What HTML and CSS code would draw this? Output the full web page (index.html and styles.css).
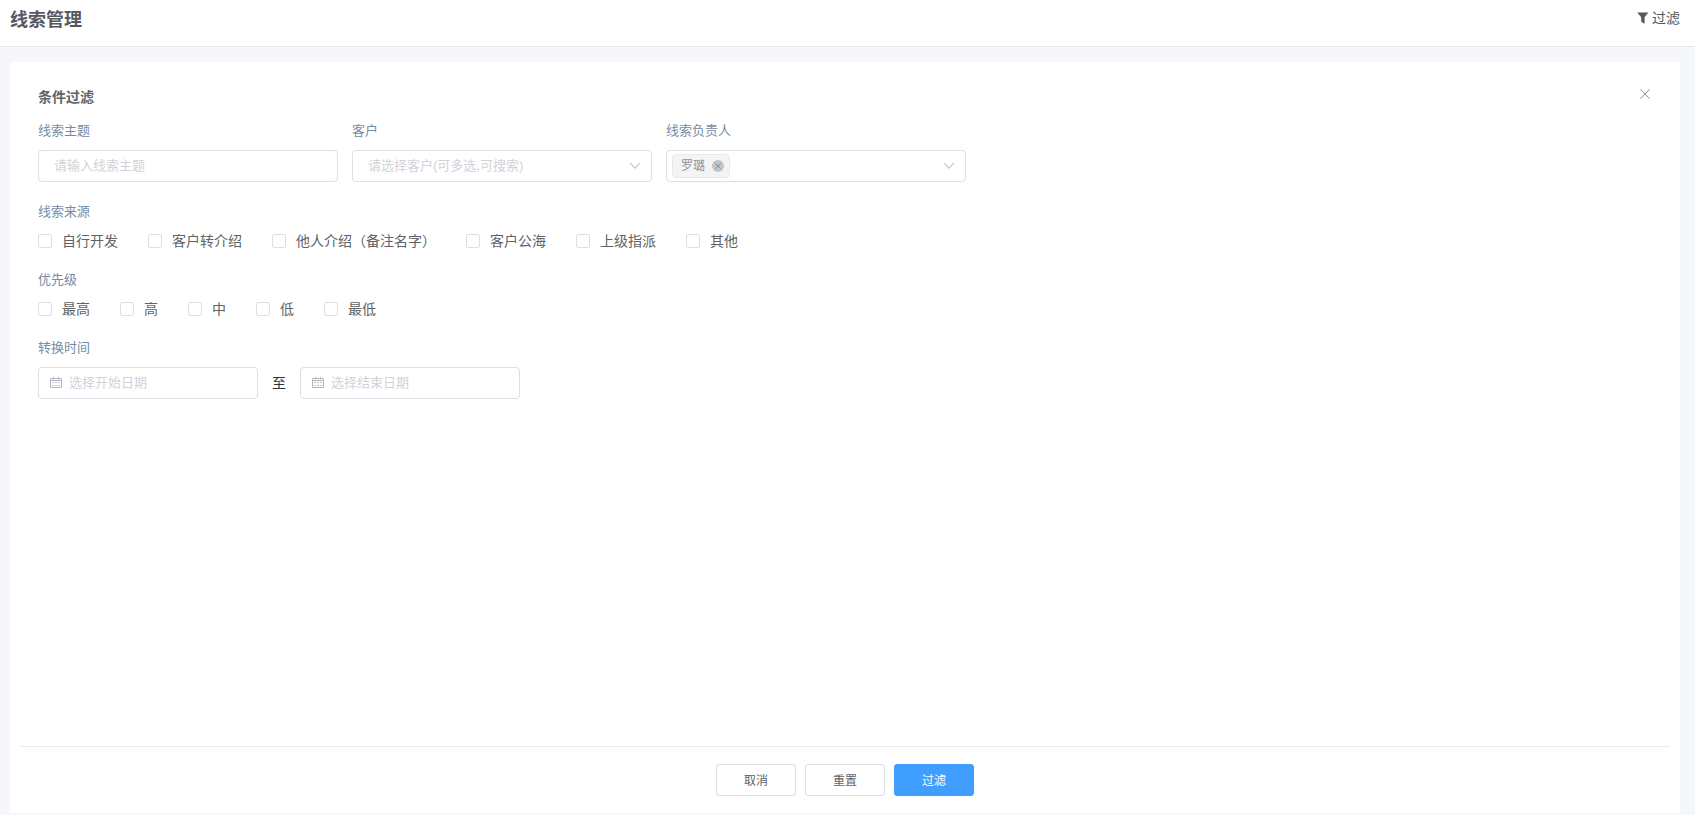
FILE: index.html
```
<!DOCTYPE html>
<html lang="zh-CN">
<head>
    <meta charset="UTF-8">
    <meta name="viewport" content="width=device-width, initial-scale=1.0">
    <title>线索管理</title>
    <link rel="stylesheet" href="styles.css">
</head>
<body>
    <header class="header">
        <h1>线索管理</h1>
        <a class="filter-link">
            <svg width="12" height="12" viewBox="0 0 12 12"><path d="M0.2 0.6h11.2L7.6 5.2v6.5L4.2 9.8V5.2z" fill="#55585e"/></svg>
            <span>过滤</span>
        </a>
    </header>

    <main class="panel">
        <div class="panel-body">
            <div class="panel-title">
                <h2>条件过滤</h2>
                <svg class="close" width="12" height="12" viewBox="0 0 12 12"><path d="M1.3 1.3l9.4 9.4M10.7 1.3l-9.4 9.4" fill="none" stroke="#909399"/></svg>
            </div>

            <div class="fields">
                <div class="field">
                    <div class="label">线索主题</div>
                    <div class="input"><span class="placeholder">请输入线索主题</span></div>
                </div>
                <div class="field">
                    <div class="label">客户</div>
                    <div class="input">
                        <span class="placeholder">请选择客户(可多选,可搜索)</span>
                        <svg class="arrow" width="12" height="8" viewBox="0 0 12 8"><path d="M1 1.2l5 5 5-5" fill="none" stroke="#c0c4cc" stroke-width="1.1"/></svg>
                    </div>
                </div>
                <div class="field">
                    <div class="label">线索负责人</div>
                    <div class="input input-tags">
                        <span class="tag">罗璐
                            <svg width="12" height="12" viewBox="0 0 12 12"><circle cx="6" cy="6" r="6" fill="#c0c4cc"/><path d="M3.4 3.4l5.2 5.2M8.6 3.4L3.4 8.6" stroke="#909399"/></svg>
                        </span>
                        <svg class="arrow" width="12" height="8" viewBox="0 0 12 8"><path d="M1 1.2l5 5 5-5" fill="none" stroke="#c0c4cc" stroke-width="1.1"/></svg>
                    </div>
                </div>
            </div>

            <div class="group">
                <div class="label">线索来源</div>
                <div class="checks">
                    <label class="check"><input type="checkbox">自行开发</label>
                    <label class="check"><input type="checkbox">客户转介绍</label>
                    <label class="check"><input type="checkbox">他人介绍（备注名字）</label>
                    <label class="check"><input type="checkbox">客户公海</label>
                    <label class="check"><input type="checkbox">上级指派</label>
                    <label class="check"><input type="checkbox">其他</label>
                </div>
            </div>

            <div class="group">
                <div class="label">优先级</div>
                <div class="checks">
                    <label class="check"><input type="checkbox">最高</label>
                    <label class="check"><input type="checkbox">高</label>
                    <label class="check"><input type="checkbox">中</label>
                    <label class="check"><input type="checkbox">低</label>
                    <label class="check"><input type="checkbox">最低</label>
                </div>
            </div>

            <div class="group">
                <div class="label">转换时间</div>
                <div class="dates">
                    <div class="input date">
                        <svg width="12" height="12" viewBox="0 0 12 12"><path d="M.5 1.5h11v9H.5zM.5 3.5h11M3.5 0v2.5M8.5 0v2.5" fill="none" stroke="#b4b8c0"/><path d="M2 5.5h8M2 8.5h8" fill="none" stroke="#c0c4cc" stroke-dasharray="2 1"/></svg>
                        <span class="placeholder">选择开始日期</span>
                    </div>
                    <span class="to">至</span>
                    <div class="input date">
                        <svg width="12" height="12" viewBox="0 0 12 12"><path d="M.5 1.5h11v9H.5zM.5 3.5h11M3.5 0v2.5M8.5 0v2.5" fill="none" stroke="#b4b8c0"/><path d="M2 5.5h8M2 8.5h8" fill="none" stroke="#c0c4cc" stroke-dasharray="2 1"/></svg>
                        <span class="placeholder">选择结束日期</span>
                    </div>
                </div>
            </div>
        </div>

        <footer class="footer">
            <button>取消</button>
            <button>重置</button>
            <button class="primary">过滤</button>
        </footer>
    </main>
</body>
</html>
```
FILE: styles.css
```
* {
    box-sizing: border-box;
}
body {
    display: flex;
    flex-direction: column;
    height: 100vh;
    margin: 0;
    overflow: hidden;
    background-color: #f5f7fb;
    color: #606266;
    font-family: "Liberation Sans", "Noto Sans CJK SC", sans-serif;
    font-size: 14px;
    line-height: 20px;
}
h1, h2 {
    margin: 0;
}
svg {
    display: block;
    flex: none;
}
.header {
    display: flex;
    justify-content: space-between;
    height: 47px;
    padding: 8px 15px 0 10px;
    background-color: #fff;
    border-bottom: 1px solid #e6e8eb;
}
.header h1 {
    font-size: 18px;
    line-height: 24px;
    color: #55585e;
}
.filter-link {
    display: flex;
    align-items: center;
    gap: 3px;
    height: 20px;
    color: #55585e;
}
.panel {
    display: flex;
    flex-direction: column;
    flex: 1;
    margin: 15px 15px 2px 10px;
    padding: 0 10px;
    background-color: #fff;
}
.panel-body {
    flex: 1;
    padding: 25px 18px 0;
}
.panel-title {
    display: flex;
    justify-content: space-between;
}
.panel-title h2 {
    font-size: 14px;
}
.close {
    margin: 1px 1px 0 0;
}
.fields {
    display: flex;
    gap: 14px;
    margin-top: 13px;
}
.field {
    width: 300px;
}
.label {
    font-size: 13px;
    line-height: 22px;
    color: #778ca2;
}
.input {
    display: flex;
    align-items: center;
    justify-content: space-between;
    height: 32px;
    margin-top: 8px;
    padding: 0 10px 0 15px;
    border: 1px solid #dcdfe6;
    border-radius: 4px;
    font-size: 13px;
}
.input-tags {
    padding-left: 5px;
}
.placeholder {
    color: #d0d3da;
}
.tag {
    display: flex;
    align-items: center;
    gap: 7px;
    height: 24px;
    padding: 0 5px 0 8px;
    background-color: #f4f4f5;
    border: 1px solid #e9e9eb;
    border-radius: 4px;
    font-size: 12px;
    color: #909399;
}
.group {
    margin-top: 18px;
}
.fields + .group {
    margin-top: 19px;
}
.checks {
    display: flex;
    gap: 30px;
    margin-top: 8px;
}
.check {
    display: flex;
    align-items: center;
    gap: 10px;
}
.check input {
    appearance: none;
    width: 14px;
    height: 14px;
    margin: 0;
    background-color: #fff;
    border: 1px solid #dcdfe6;
    border-radius: 2px;
}
.dates {
    display: flex;
    align-items: center;
    margin-top: 8px;
}
.date {
    justify-content: flex-start;
    gap: 7px;
    width: 220px;
    margin-top: 0;
    padding-left: 11px;
}
.to {
    width: 42px;
    text-align: center;
    color: #303133;
}
.footer {
    display: flex;
    justify-content: center;
    gap: 9px;
    height: 67px;
    padding-top: 17px;
    border-top: 1px solid #e9ebee;
}
.footer button {
    width: 80px;
    height: 32px;
    padding: 0 0 1px;
    background-color: #fff;
    border: 1px solid #dcdfe6;
    border-radius: 3px;
    font-family: inherit;
    font-size: 12px;
    color: #606266;
}
.footer .primary {
    background-color: #409eff;
    border-color: #409eff;
    color: #fff;
}
```
